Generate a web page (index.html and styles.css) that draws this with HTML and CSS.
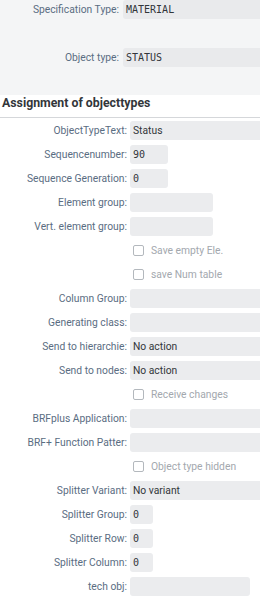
FILE: index.html
```html
<!DOCTYPE html>
<html lang="en">
<head>
    <meta charset="UTF-8">
    <meta name="viewport" content="width=device-width, initial-scale=1.0">
    <title>Object Types</title>
    <link rel="stylesheet" href="styles.css">
</head>
<body>

    <!-- Header Fields -->
    <div class="top-section">
        <div class="top-row">
            <label>Specification Type:</label>
            <div class="field mono">MATERIAL</div>
        </div>
        <div class="top-row">
            <label>Object type:</label>
            <div class="field mono">STATUS</div>
        </div>
    </div>

    <h3 class="section-title">Assignment of objecttypes</h3>

    <!-- Assignment Form -->
    <div class="form">
        <div class="row"><label>ObjectTypeText:</label><div class="field">Status</div></div>
        <div class="row"><label>Sequencenumber:</label><div class="field mono w-s">90</div></div>
        <div class="row"><label>Sequence Generation:</label><div class="field mono w-s">0</div></div>
        <div class="row"><label>Element group:</label><div class="field w-m"></div></div>
        <div class="row"><label>Vert. element group:</label><div class="field w-m"></div></div>
        <div class="row"><span></span><div class="check"><span class="box"></span>Save empty Ele.</div></div>
        <div class="row"><span></span><div class="check"><span class="box"></span>save Num table</div></div>
        <div class="row"><label>Column Group:</label><div class="field"></div></div>
        <div class="row"><label>Generating class:</label><div class="field"></div></div>
        <div class="row"><label>Send to hierarchie:</label><div class="field">No action</div></div>
        <div class="row"><label>Send to nodes:</label><div class="field">No action</div></div>
        <div class="row"><span></span><div class="check"><span class="box"></span>Receive changes</div></div>
        <div class="row"><label>BRFplus Application:</label><div class="field"></div></div>
        <div class="row"><label>BRF+ Function Patter:</label><div class="field"></div></div>
        <div class="row"><span></span><div class="check"><span class="box"></span>Object type hidden</div></div>
        <div class="row"><label>Splitter Variant:</label><div class="field">No variant</div></div>
        <div class="row"><label>Splitter Group:</label><div class="field mono w-xs">0</div></div>
        <div class="row"><label>Splitter Row:</label><div class="field mono w-xs">0</div></div>
        <div class="row"><label>Splitter Column:</label><div class="field mono w-xs">0</div></div>
        <div class="row"><label>tech obj:</label><div class="field w-l"></div></div>
    </div>

</body>
</html>
```

FILE: styles.css
```css
body {
    margin: 0;
    font-family: Roboto, "Liberation Sans", Arial, sans-serif;
    font-size: 10.3px;
    color: #32363a;
    background-color: #ffffff;
    overflow: hidden;
}

label {
    color: #5a6d82;
    text-align: right;
    white-space: nowrap;
}

/* Top Section */
.top-section {
    background-color: #f4f5f6;
    height: 95px;
}

.top-row {
    display: grid;
    grid-template-columns: 119px 1fr;
    column-gap: 4px;
    align-items: center;
    height: 19px;
    margin-bottom: 29px;
}

.top-row .field {
    background-color: #e9eaec;
}

/* Section Title */
.section-title {
    margin: 0;
    padding: 1px 2px 0;
    height: 21px;
    line-height: 15px;
    font-size: 12.3px;
    font-weight: bold;
    border-bottom: 1px solid #d5d7da;
}

/* Form */
.row {
    display: grid;
    grid-template-columns: 127px 1fr;
    column-gap: 3px;
    align-items: center;
    height: 24px;
}

.field {
    height: 19px;
    line-height: 19px;
    padding-left: 3px;
    background-color: #ebecee;
    border-radius: 3px 0 0 3px;
    white-space: nowrap;
    overflow: hidden;
}

.mono {
    font-family: "DejaVu Sans Mono", monospace;
    font-size: 10px;
}

.w-xs { width: 20px; border-radius: 3px; }
.w-s { width: 35px; border-radius: 3px; }
.w-m { width: 80px; border-radius: 3px; }
.w-l { width: 117px; border-radius: 3px; }

.check {
    display: flex;
    align-items: center;
    color: #a3a8ae;
    padding-left: 3px;
}

.check .box {
    width: 9px;
    height: 9px;
    border: 1px solid #b3b8bd;
    border-radius: 2px;
    margin-right: 7px;
}
```
